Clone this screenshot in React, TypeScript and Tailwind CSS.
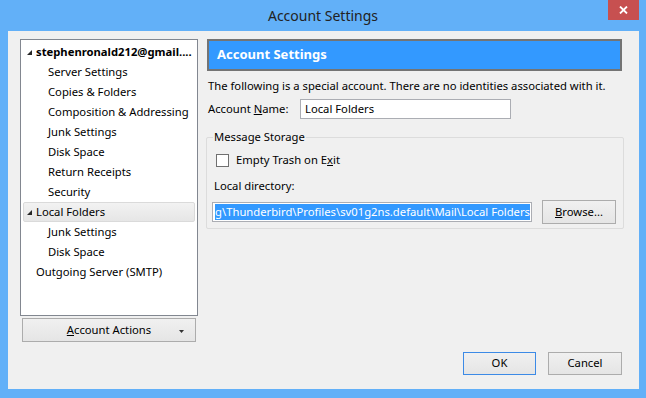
import React from 'react';

const font = "font-['Noto_Sans',sans-serif]";

function Expander() {
  return (
    <svg width="5" height="5" viewBox="0 0 5 5" className="shrink-0">
      <polygon points="5,0 5,5 0,5" fill="#262626" />
    </svg>
  );
}

const treeItems: { label: string; level: 0 | 1; bold?: boolean; expander?: boolean; selected?: boolean }[] = [
  { label: 'stephenronald212@gmail....', level: 0, bold: true, expander: true },
  { label: 'Server Settings', level: 1 },
  { label: 'Copies & Folders', level: 1 },
  { label: 'Composition & Addressing', level: 1 },
  { label: 'Junk Settings', level: 1 },
  { label: 'Disk Space', level: 1 },
  { label: 'Return Receipts', level: 1 },
  { label: 'Security', level: 1 },
  { label: 'Local Folders', level: 0, expander: true, selected: true },
  { label: 'Junk Settings', level: 1 },
  { label: 'Disk Space', level: 1 },
  { label: 'Outgoing Server (SMTP)', level: 0 },
];

function Button({ children, primary, className = '' }: { children: React.ReactNode; primary?: boolean; className?: string }) {
  return (
    <div
      className={`flex items-center justify-center h-[23px] border bg-gradient-to-b from-[#f0f0f0] to-[#e5e5e5] text-[11.25px] text-black ${
        primary ? 'border-[#3c8ae6]' : 'border-[#acacac]'
      } ${className}`}
    >
      {children}
    </div>
  );
}

export default function App() {
  return (
    <div className={`w-[646px] h-[398px] bg-[#62b0f8] flex flex-col ${font} overflow-hidden`}>
      {/* Title bar */}
      <div className="relative h-[31px] shrink-0 flex items-center justify-center">
        <span className="text-[14px] text-[#222] mt-[-1px]">Account Settings</span>
        <div className="absolute right-[7px] top-0 w-[31px] h-[20px] bg-[#c75050] flex items-center justify-center">
          <svg width="9" height="8" viewBox="0 0 9 8">
            <path d="M1 0.5 L8 7.5 M8 0.5 L1 7.5" stroke="#fff" strokeWidth="1.8" />
          </svg>
        </div>
      </div>

      {/* Client area */}
      <div className="ml-[8px] mr-[7px] h-[358px] bg-[#f0f0f0] flex flex-col pt-[8px] pl-[12px] pr-[17px] text-[11.25px]">
        <div className="flex">
          {/* Left column */}
          <div className="w-[178px] flex flex-col">
            <div className="h-[277px] bg-white border border-[#828790] pt-[2px] px-[1px]">
              {treeItems.map((item, i) => (
                <div
                  key={i}
                  className={`h-[20px] mx-[1px] flex items-center text-black whitespace-nowrap ${
                    item.selected
                      ? 'border border-[#dadada] rounded-[2px] bg-gradient-to-b from-[#f2f2f2] to-[#e6e6e6]'
                      : 'border border-transparent'
                  } ${item.level === 1 ? 'pl-[24px]' : item.expander ? 'pl-[3px]' : 'pl-[12px]'} ${item.bold ? 'font-bold' : ''}`}
                >
                  {item.expander && (
                    <span className="w-[9px] shrink-0 flex items-center pt-[1px]">
                      <Expander />
                    </span>
                  )}
                  <span>{item.label}</span>
                </div>
              ))}
            </div>
            <Button className="mt-[2px] mx-[2px] h-[24px] relative">
              <span>
                <span className="underline">A</span>ccount Actions
              </span>
              <svg width="5" height="3" viewBox="0 0 5 3" className="absolute right-[11px] top-[11px]">
                <polygon points="0,0 5,0 2.5,3" fill="#333" />
              </svg>
            </Button>
          </div>

          {/* Right column */}
          <div className="flex-1 ml-[8px] flex flex-col">
            <div className="h-[32px] ml-[1px] border-2 border-[#747474] bg-[#3399ff] flex items-center pl-[8px]">
              <span className="text-[13px] font-bold text-white">Account Settings</span>
            </div>
            <div className="mt-[7px] ml-[2px] text-black leading-[16px] whitespace-nowrap">
              The following is a special account. There are no identities associated with it.
            </div>
            <div className="mt-[5px] ml-[2px] flex items-center text-black">
              <span className="w-[92px]">
                Account <span className="underline">N</span>ame:
              </span>
              <div className="w-[211px] h-[20px] border border-[#abadb3] bg-white flex items-center pl-[4px]">
                Local Folders
              </div>
            </div>

            {/* Group box */}
            <div className="relative mt-[18px] mr-[-2px] h-[92px] border border-[#dcdcdc] rounded-[2px]">
              <span className="absolute left-[6px] top-[-9px] bg-[#f0f0f0] px-[1px] text-black leading-[16px]">
                Message Storage
              </span>
              <div className="flex items-center h-[13px] mt-[16px] ml-[9px] text-black">
                <div className="w-[13px] h-[13px] border border-[#707070] bg-white" />
                <span className="ml-[7px]">
                  Empty Trash on E<span className="underline">x</span>it
                </span>
              </div>
              <div className="mt-[11px] ml-[7px] text-black leading-[16px]">Local directory:</div>
              <div className="mt-[6px] ml-[5px] flex items-center">
                <div className="w-[320px] h-[20px] border border-[#abadb3] bg-white flex justify-end items-center overflow-hidden pr-[1px]">
                  <span className="bg-[#3399ff] text-white whitespace-nowrap leading-[16px] h-[16px]">
                    g\Thunderbird\Profiles\sv01g2ns.default\Mail\Local Folders
                  </span>
                </div>
                <Button className="ml-[10px] w-[74px] h-[24px]">
                  <span>
                    <span className="underline">B</span>rowse...
                  </span>
                </Button>
              </div>
            </div>
          </div>
        </div>

        {/* Bottom buttons */}
        <div className="flex justify-end mt-[10px]">
          <Button primary className="w-[73px]">
            OK
          </Button>
          <Button className="w-[74px] ml-[12px]">Cancel</Button>
        </div>
      </div>
    </div>
  );
}
